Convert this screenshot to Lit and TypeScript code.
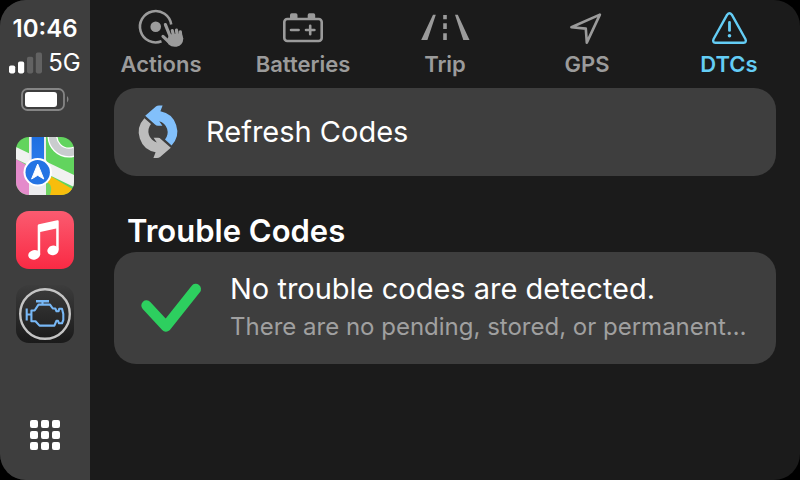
import { LitElement, html, css, svg } from "lit";
import { customElement, property } from "lit/decorators.js";
import { classMap } from "lit/directives/class-map.js";

const actionsIcon = svg`
  <path d="M38.2 16.5A15.7 15.7 0 1 0 28.5 33.3" fill="none" stroke="currentColor" stroke-width="2.6"/>
  <circle cx="22.7" cy="18.7" r="5.3" fill="currentColor"/>
  <g fill="none" stroke="currentColor" stroke-width="3.2" stroke-linecap="round">
    <path d="M32.4 16.6L37.4 29M39.3 22.6L41 29M43.5 22.2L44.4 29M47.3 23.8L48 30M30 28.4L36 34"/>
  </g>
  <path d="M36.5 26.5L48.6 25.2L50.3 30.5Q50 37.4 43.6 38.7Q38.8 39.4 35.6 36.4L33.6 32.5Z" fill="currentColor"/>`;

const batteriesIcon = svg`
  <rect x="9.3" y="11" width="37.4" height="22" rx="3" fill="none" stroke="currentColor" stroke-width="2.6"/>
  <path d="M15 10V7Q15 5.3 16.7 5.3H20.8Q22.5 5.3 22.5 7V10ZM32.7 10V7Q32.7 5.3 34.4 5.3H38.5Q40.2 5.3 40.2 7V10Z" fill="currentColor"/>
  <path d="M16 22H23.6M31 22H39.4M35.2 17.8V26.2" fill="none" stroke="currentColor" stroke-width="2.6" stroke-linecap="round"/>`;

const tripIcon = svg`
  <path d="M16 6.7H18.8L10.4 32H4.2ZM38 6.7H40.8L52.5 32H46.3Z" fill="currentColor"/>
  <path d="M28 7V11.2M28 15.2V21M28 25.2V32" fill="none" stroke="currentColor" stroke-width="3.6"/>`;

const gpsIcon = svg`
  <path d="M40.9 6.6L12.4 19.2L26.8 20.6L27.8 34.6Z" fill="none" stroke="currentColor" stroke-width="2.6" stroke-linejoin="round"/>`;

const dtcsIcon = svg`
  <path d="M26.2 6.7Q28.5 3.8 30.8 6.7L44.4 31Q45.8 34.4 42.6 34.8H14.4Q11.2 34.4 12.6 31Z" fill="none" stroke="currentColor" stroke-width="2.4" stroke-linejoin="round"/>
  <path d="M28.5 14.4V22.4" stroke="currentColor" stroke-width="2.8" stroke-linecap="round"/>
  <circle cx="28.5" cy="27.8" r="1.8" fill="currentColor"/>`;

const tabs = [
  { label: "Actions", icon: actionsIcon, current: false },
  { label: "Batteries", icon: batteriesIcon, current: false },
  { label: "Trip", icon: tripIcon, current: false },
  { label: "GPS", icon: gpsIcon, current: false },
  { label: "DTCs", icon: dtcsIcon, current: true },
];

const mapsIcon = svg`
  <defs>
    <linearGradient id="blue" x1="0" y1="0" x2="0" y2="1">
      <stop offset="0" stop-color="#1f6fe0"/><stop offset="1" stop-color="#2f7ff0"/>
    </linearGradient>
  </defs>
  <rect width="58" height="58" fill="#62d45e"/>
  <circle cx="53" cy="-1" r="16.5" fill="none" stroke="#fff" stroke-width="10"/>
  <circle cx="53" cy="-1" r="16.5" fill="none" stroke="#c9ccce" stroke-width="7.4"/>
  <path d="M0 22L14 30V58H0Z" fill="#e48bcb"/>
  <path d="M28 40L36 40L58 53V58H28Z" fill="#f8bd0c"/>
  <path d="M28 44Q38 46 34 58H28Z" fill="#72d563"/>
  <path d="M0 10L58 38V50L0 22Z" fill="#f1f1f1"/>
  <rect x="13" width="17" height="58" fill="#ececee"/>
  <rect x="15.6" width="12.4" height="36" fill="url(#blue)"/>
  <circle cx="21.7" cy="35.3" r="14.2" fill="#fff"/>
  <circle cx="21.7" cy="35.3" r="12.2" fill="#2474e4"/>
  <path d="M21.7 27L27.8 42L21.7 38.3L15.6 42Z" fill="#fff" stroke="#fff" stroke-linejoin="round"/>`;

const musicIcon = svg`
  <defs>
    <linearGradient id="red" x1="0" y1="0" x2="0" y2="1">
      <stop offset="0" stop-color="#fb5b70"/><stop offset="1" stop-color="#fa2a44"/>
    </linearGradient>
  </defs>
  <rect width="58" height="58" fill="url(#red)"/>
  <path d="M21.7 14.8Q21.7 13.6 22.9 13.3L41.3 9.2Q42.7 9 42.7 10.3V38.6H40.2V17.4L24.2 21V43.8H21.7Z" fill="#fff"/>
  <ellipse cx="18.2" cy="43.8" rx="6" ry="4.8" transform="rotate(-14 18.2 43.8)" fill="#fff"/>
  <ellipse cx="37" cy="39.4" rx="5.7" ry="4.7" transform="rotate(-14 37 39.4)" fill="#fff"/>`;

const engineIcon = svg`
  <defs>
    <linearGradient id="dark" x1="0" y1="0" x2="0" y2="1">
      <stop offset="0" stop-color="#3c3c3c"/><stop offset="1" stop-color="#1a1a1a"/>
    </linearGradient>
  </defs>
  <rect width="58" height="58" fill="url(#dark)"/>
  <circle cx="29" cy="29" r="24.8" fill="none" stroke="#c4c4c4" stroke-width="2.4"/>
  <g fill="none" stroke="#78b8f6" stroke-width="2.1" stroke-linejoin="round">
    <path d="M22.5 19.6H34L36.8 23.5H39.3L40.5 26.2H42.6L43.2 23.8H46L47.3 29V35L46 38.3H43L42 35.8H40.4L38.4 40.6H23.5L19.5 36.2H15.4V25.5H18.6Z"/>
    <path d="M10.7 23.6V35.4M10.7 29.5H15.4M26.5 16.4V19.6"/>
    <path d="M20 16.2H33" stroke-width="2.6"/>
  </g>`;

const apps = [
  { label: "Maps", icon: mapsIcon },
  { label: "Music", icon: musicIcon },
  { label: "Engine diagnostics", icon: engineIcon },
];

@customElement("side-dock")
class SideDock extends LitElement {
  static styles = css`
    :host {
      display: flex;
      flex-direction: column;
      align-items: center;
      background: #3e3e3e;
      color: #fff;
      padding: 14px 0 29px;
    }
    .clock {
      font-size: 24px;
      line-height: 30px;
      font-weight: 600;
    }
    .network {
      display: flex;
      align-items: center;
      gap: 6px;
      margin-top: 4px;
      font-size: 24px;
      line-height: 30px;
    }
    .signal {
      width: 33px;
      height: 22px;
    }
    .battery {
      width: 50px;
      height: 24px;
      margin-top: 9px;
    }
    .apps {
      display: flex;
      flex-direction: column;
      gap: 16px;
      margin-top: 26px;
    }
    button {
      display: block;
      padding: 0;
      border: 0;
      background: none;
      font: inherit;
      color: inherit;
    }
    .app {
      width: 58px;
      height: 58px;
      border-radius: 13px;
      overflow: hidden;
    }
    svg {
      display: block;
    }
    .home {
      margin-top: auto;
    }
  `;

  render() {
    return html`
      <time class="clock">10:46</time>
      <div class="network">
        <svg class="signal" viewBox="0 0 33 22" role="img" aria-label="Signal: two of four bars">
          <g fill="#fff">
            <rect x="0" y="13.4" width="6.2" height="8" rx="1.8"/>
            <rect x="9" y="9.6" width="6.2" height="11.8" rx="1.8"/>
          </g>
          <g fill="#626262">
            <rect x="18" y="4.8" width="6.2" height="16.6" rx="1.8"/>
            <rect x="26.8" y="0.6" width="6.2" height="20.8" rx="1.8"/>
          </g>
        </svg>
        <span>5G</span>
      </div>
      <svg class="battery" viewBox="0 0 50 24" role="img" aria-label="Battery">
        <rect x="2" y="2" width="42" height="21" rx="5.5" fill="none" stroke="#858585" stroke-width="1.8"/>
        <rect x="5" y="5" width="32" height="15" rx="3" fill="#fff"/>
        <path d="M47 9Q50 12.2 47 15.6Z" fill="#858585"/>
      </svg>
      <nav class="apps" aria-label="Apps">
        ${apps.map(
          (app) => html`<button class="app" aria-label=${app.label}>
            <svg viewBox="0 0 58 58" width="58" height="58">${app.icon}</svg>
          </button>`
        )}
      </nav>
      <button class="home" aria-label="Home screen">
        <svg viewBox="0 0 32 32" width="32" height="32" fill="#fff">
          ${[1, 12, 23].map((y) => [1, 12, 23].map((x) => svg`<rect x=${x} y=${y} width="8" height="8" rx="2"/>`))}
        </svg>
      </button>
    `;
  }
}

@customElement("tab-bar")
class TabBar extends LitElement {
  static styles = css`
    :host {
      display: block;
    }
    nav {
      display: flex;
    }
    button {
      flex: 1 1 0;
      min-width: 0;
      display: flex;
      flex-direction: column;
      align-items: center;
      padding: 8px 0 10px;
      border: 0;
      background: none;
      color: #9b9b9b;
      font: inherit;
      font-size: 22px;
      line-height: 28px;
      font-weight: 600;
    }
    .current {
      color: #64cdf5;
    }
    .icon {
      display: block;
      width: 56px;
      height: 42px;
    }
  `;

  render() {
    return html`<nav aria-label="Sections">
      ${tabs.map(
        (tab) => html`<button class=${classMap({ current: tab.current })} aria-current=${tab.current ? "page" : "false"}>
          <svg class="icon" viewBox="0 0 56 42" aria-hidden="true">${tab.icon}</svg>
          <span>${tab.label}</span>
        </button>`
      )}
    </nav>`;
  }
}

@customElement("list-row")
class ListRow extends LitElement {
  @property() heading = "";
  @property() detail = "";
  @property() kind = "refresh";

  static styles = css`
    :host {
      display: block;
    }
    button {
      display: flex;
      align-items: center;
      gap: 24px;
      width: 100%;
      min-height: 88px;
      padding: 0 24px 0 20px;
      border: 0;
      border-radius: 22px;
      background: #3e3e3e;
      color: #fff;
      font: inherit;
      text-align: left;
    }
    .detailed {
      min-height: 112px;
    }
    .icon {
      flex: none;
      width: 48px;
      height: 56px;
    }
    .detailed .icon {
      width: 72px;
    }
    .text {
      min-width: 0;
      display: flex;
      flex-direction: column;
      gap: 4px;
    }
    .detailed .text {
      padding-bottom: 2px;
    }
    .heading {
      font-size: 29px;
      line-height: 36px;
    }
    .detail {
      color: #a0a0a0;
      font-size: 24px;
      line-height: 32px;
      white-space: nowrap;
      overflow: hidden;
      text-overflow: ellipsis;
    }
  `;

  private icon() {
    if (this.kind === "check") {
      return html`<svg class="icon" viewBox="0 0 72 56" aria-hidden="true">
        <path d="M12.5 25.5L32 46.5L61.8 9" fill="none" stroke="#2dcf5f" stroke-width="10.4" stroke-linecap="round" stroke-linejoin="round"/>
      </svg>`;
    }
    const arrow = "M11.2 11.8L21.9 2.5Q23.2 1.6 25 1.6H28.6L26.4 7.3A20.4 20.4 0 0 1 37.6 41.4L31 35.6A11.5 11.5 0 0 0 25.2 17.2L28.4 21.8H24.4Q22.4 22 21 20.4Z";
    return html`<svg class="icon" viewBox="0 0 48 56" aria-hidden="true">
      <path d=${arrow} fill="#82c0fb"/>
      <path d=${arrow} fill="#bcbcbc" transform="rotate(180 24 27.8)"/>
    </svg>`;
  }

  render() {
    return html`<button class=${classMap({ detailed: this.detail !== "" })}>
      ${this.icon()}
      <span class="text">
        <span class="heading">${this.heading}</span>
        ${this.detail ? html`<span class="detail">${this.detail}</span>` : null}
      </span>
    </button>`;
  }
}

@customElement("app-root")
class AppRoot extends LitElement {
  static styles = css`
    :host {
      display: block;
      background: #000;
      font-family: Inter, "Liberation Sans", sans-serif;
    }
    .screen {
      display: grid;
      grid-template-columns: 90px minmax(0, 1fr);
      min-height: 100vh;
      border-radius: 26px;
      overflow: hidden;
      background: #1b1b1b;
    }
    .content {
      padding: 0 24px 24px;
    }
    h2 {
      margin: 36px 0 0;
      padding: 0 0 2px 13px;
      color: #fff;
      font-size: 31px;
      line-height: 38px;
      font-weight: 600;
    }
  `;

  render() {
    return html`<div class="screen">
      <side-dock></side-dock>
      <main>
        <tab-bar></tab-bar>
        <div class="content">
          <list-row kind="refresh" heading="Refresh Codes"></list-row>
          <h2>Trouble Codes</h2>
          <list-row
            kind="check"
            heading="No trouble codes are detected."
            detail="There are no pending, stored, or permanent…"
          ></list-row>
        </div>
      </main>
    </div>`;
  }
}
